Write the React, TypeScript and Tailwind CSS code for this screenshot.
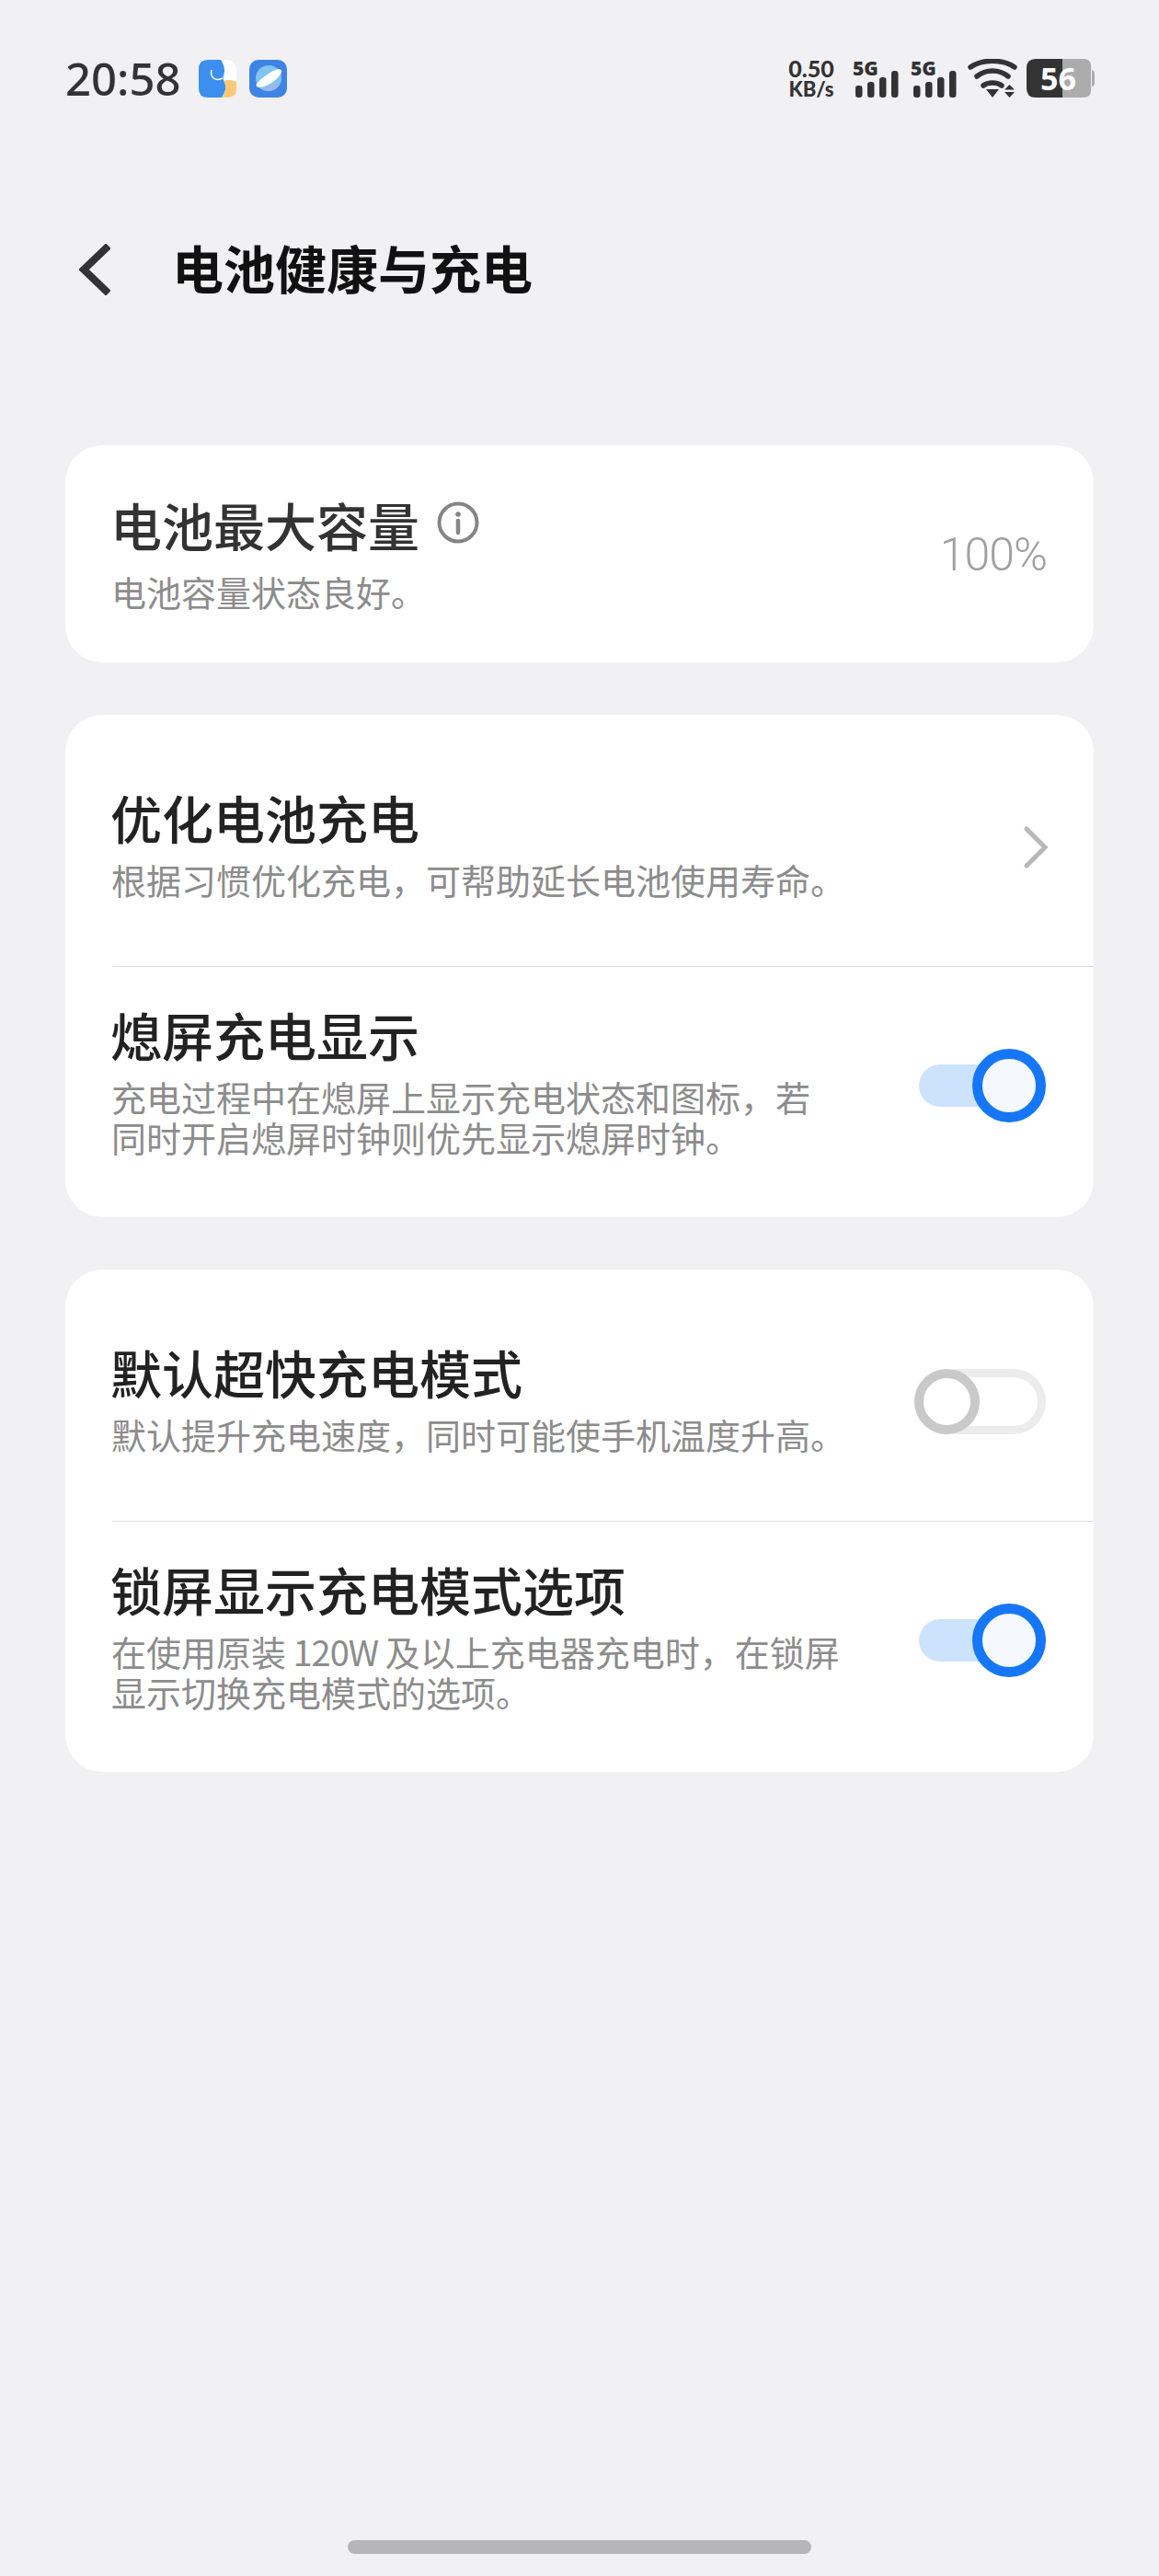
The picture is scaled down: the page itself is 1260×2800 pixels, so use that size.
const cjk = "font-['Noto_Sans_CJK_SC','Noto_Sans',sans-serif]";

function Signal() {
  return (
    <div className="relative w-[50px] h-[42px]">
      <span className="absolute left-0 top-[-1px] font-['Open_Sans',sans-serif] font-extrabold text-[21px] leading-[22px] text-[#333]">5G</span>
      <svg width="50" height="42" viewBox="0 0 50 42" className="absolute left-0 top-0" fill="#333">
        <rect x="3" y="29" width="7.500" height="13" rx="3" />
        <rect x="16" y="25" width="7.500" height="17" rx="3" />
        <rect x="29" y="20" width="7.500" height="22" rx="3" />
        <rect x="42" y="13" width="7.500" height="29" rx="3" />
      </svg>
    </div>
  );
}

function Wifi() {
  return (
    <svg width="54" height="42" viewBox="0 0 54 42" fill="none" stroke="#333" strokeLinecap="round">
      <path d="M3 9C16 0 38 0 51 9" strokeWidth="5.500" />
      <path d="M10 19C20 11 34 11 44 19" strokeWidth="5.500" />
      <path d="M17 29C22 25 32 25 37 29" strokeWidth="5.500" />
      <path d="M20 33H34L27 42Z" fill="#333" stroke="none" />
      <path d="M40 33.500L45.500 28L51 33.500Z M40 36H51L45.500 42Z" fill="#333" stroke="none" />
    </svg>
  );
}

function Battery() {
  return (
    <div className="relative w-[74px] h-[42px]">
      <svg width="74" height="42" viewBox="0 0 74 42" className="absolute left-0 top-0">
        <path d="M39 0H62Q70 0 70 8V34Q70 42 62 42H39Z" fill="#acacac" />
        <path d="M71 12Q74 13 74 16V26Q74 29 71 30Z" fill="#acacac" />
        <path d="M39 0H10Q0 0 0 10V32Q0 42 10 42H39Z" fill="#333" />
      </svg>
      <span className="absolute left-[15px] top-0 font-['Open_Sans',sans-serif] font-bold text-[34px] leading-[42px] text-white">56</span>
    </div>
  );
}

function StatusBar() {
  return (
    <div className="flex items-center h-[42px] mt-[64px] pl-[71px] pr-[70px]">
      <span className="font-['Noto_Sans',sans-serif] font-medium text-[49px] leading-[42px] text-[#333]">20:58</span>
      <svg width="41" height="41" viewBox="0 0 41 41" className="ml-[20px]">
        <rect width="41" height="41" rx="10" fill="#fff" />
        <path d="M10 0H24C28 6 29 12 27 17C26 20 27 22 28 24C31 30 28 37 25 41H10Q0 41 0 31V10Q0 0 10 0Z" fill="#3c8eef" />
        <path d="M27 23C32 21 37 22 41 24V31Q41 41 31 41H25C29 36 31 29 27 23Z" fill="#fbc976" />
        <path d="M14 11C12 19 18 24 26 20" fill="none" stroke="#fff" strokeWidth="1.500" />
      </svg>
      <svg width="41" height="41" viewBox="0 0 41 41" className="ml-[14px]">
        <rect width="41" height="41" rx="10" fill="#3f83e4" />
        <circle cx="21" cy="20" r="14" fill="#7fc4f3" />
        <path d="M8 26C13 20 25 11 32 10C36 10 36 14 33 17C28 24 17 30 11 30C8 30 7 28 8 26Z" fill="#fff" />
        <path d="M12 31C20 31 30 25 34 23C32 30 26 34 21 34C17 34 14 33 12 31Z" fill="#9cb9ea" />
      </svg>
      <div className="ml-auto flex items-center">
        <div className="flex flex-col items-center w-[54px] font-['Lato',sans-serif] font-black text-[#333]">
          <span className="text-[25px] leading-[24px]">0.50</span>
          <span className="text-[22px] leading-[22px]">KB/s</span>
        </div>
        <div className="flex gap-[13px] ml-[18px]">
          <Signal />
          <Signal />
        </div>
        <div className="flex items-center gap-[10px] ml-[12px]">
          <Wifi />
          <Battery />
        </div>
      </div>
    </div>
  );
}

function Toggle({ on }: { on: boolean }) {
  if (on) {
    return (
      <div className="flex items-center w-[138px] h-[81px] mt-[12px] shrink-0">
        <div className="w-[80px] h-[46px] rounded-l-full bg-[#cce2fd]" />
        <div className="w-[80px] h-[80px] -ml-[22px] rounded-full border-[11px] border-[#1677f6] bg-[#f5f9ff]" />
      </div>
    );
  }
  return (
    <div className="relative w-[143px] h-[71px] mt-[8px] shrink-0">
      <div className="absolute right-0 top-0 w-[130px] h-[71px] rounded-full border-[9px] border-[#ececec]" />
      <div className="absolute left-0 top-0 w-[71px] h-[71px] rounded-full border-[10px] border-[#c9c9c9] bg-white" />
    </div>
  );
}

function Row({ title, desc, right, first }: { title: string; desc: React.ReactNode[]; right: React.ReactNode; first?: boolean }) {
  return (
    <div className={`flex items-center justify-between pr-[52px] ${first ? "pt-[77px] pb-[72px]" : "border-t border-[#dcdcdc] pt-[39px] pb-[65px]"}`}>
      <div>
        <div className="-ml-[2px] text-[56px] font-medium leading-[68px] text-[#222]">{title}</div>
        <div className="mt-[12px] -ml-[1px] text-[38px] leading-[44px] text-[#8c8c8c]">
          {desc.map((line, i) => (
            <div key={i}>{line}</div>
          ))}
        </div>
      </div>
      {right}
    </div>
  );
}

export default function App() {
  return (
    <div className={`flex flex-col h-[2800px] bg-[#f1f1f4] ${cjk}`}>
      <StatusBar />

      <div className="flex items-center h-[68px] mt-[150px] pl-[86px]">
        <svg width="34" height="56" viewBox="0 0 34 56" fill="none" stroke="#333" strokeWidth="8" strokeLinecap="square" className="mt-[6px]">
          <path d="M29 5L5 28L29 51" />
        </svg>
        <h1 className="ml-[67px] font-bold text-[56px] leading-[68px] text-[#111]">电池健康与充电</h1>
      </div>

      <div className="flex flex-col gap-[57px] mt-[160px] mx-[71px]">
        <div className="flex items-center justify-between rounded-[40px] bg-white pl-[51px] pr-[51px] pt-[52px] pb-[55px]">
          <div>
            <div className="flex items-center gap-[19px] -ml-[2px]">
              <span className="text-[56px] font-medium leading-[68px] text-[#333]">电池最大容量</span>
              <svg width="46" height="46" viewBox="0 0 46 46" fill="none" stroke="#858585" className="-mt-[4px]">
                <circle cx="23" cy="23" r="20.500" strokeWidth="4" />
                <circle cx="23" cy="14" r="2.800" fill="#858585" stroke="none" />
                <path d="M23 21V34" strokeWidth="4.500" strokeLinecap="round" />
              </svg>
            </div>
            <div className="mt-[17px] -ml-[1px] text-[38px] leading-[44px] text-[#8c8c8c]">电池容量状态良好。</div>
          </div>
          <span className="mt-[6px] font-['Roboto',sans-serif] font-light text-[50px] tracking-[-1px] text-[#a0a0a0]">100%</span>
        </div>

        <div className="rounded-[40px] bg-white pl-[51px]">
          <Row
            first
            title="优化电池充电"
            desc={["根据习惯优化充电，可帮助延长电池使用寿命。"]}
            right={
              <svg width="28" height="46" viewBox="0 0 28 46" fill="none" stroke="#b8b8b8" strokeWidth="5" strokeLinecap="round" className="-mr-[3px] mt-[10px]">
                <path d="M4 3L24 23L4 43" />
              </svg>
            }
          />
          <Row
            title="熄屏充电显示"
            desc={["充电过程中在熄屏上显示充电状态和图标，若", "同时开启熄屏时钟则优先显示熄屏时钟。"]}
            right={<Toggle on />}
          />
        </div>

        <div className="rounded-[40px] bg-white pl-[51px]">
          <Row first title="默认超快充电模式" desc={["默认提升充电速度，同时可能使手机温度升高。"]} right={<Toggle on={false} />} />
          <Row
            title="锁屏显示充电模式选项"
            desc={[
              <>
                在使用原装<span className="tracking-[-1px]"> 120W </span>及以上充电器充电时，在锁屏
              </>,
              "显示切换充电模式的选项。",
            ]}
            right={<Toggle on />}
          />
        </div>
      </div>

      <div className="mt-auto mb-[24px] mx-auto w-[504px] h-[15px] rounded-full bg-[#b6b6b8]" />
    </div>
  );
}
